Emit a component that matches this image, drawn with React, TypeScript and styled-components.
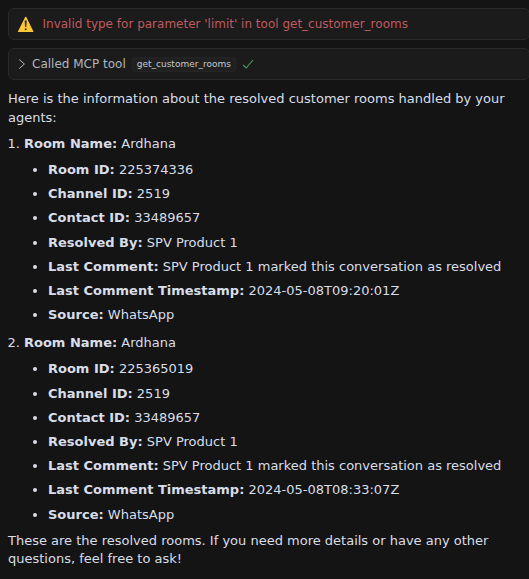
import React from 'react';
import styled, { createGlobalStyle } from 'styled-components';

const GlobalStyle = createGlobalStyle`
  html, body { margin: 0; background: #141414; overflow: hidden; }
  * { box-sizing: border-box; }
`;

const Chat = styled.main`
  width: 529px;
  height: 579px;
  overflow: hidden;
  padding: 8px 0 0 8px;
  background: #141414;
  color: #d8dee9;
  font: 13px/18.2px "DejaVu Sans", sans-serif;
`;

const Panel = styled.div<{ $gap: number; $pad: number }>`
  display: flex;
  align-items: center;
  gap: ${p => p.$gap}px;
  width: 522px;
  height: 32px;
  padding-left: ${p => p.$pad}px;
  border: 1px solid #2a2a2a;
  border-radius: 6px;
  background: #1b1b1b;
  margin-bottom: 8px;
`;

const ErrorText = styled.span`color: #bf5a60; font-size: 12px;`;

const ToolLabel = styled.span`font-size: 12px; color: #b0b5be;`;

const ToolName = styled.code`
  margin: 0 0 0 2px;
  padding: 0 4px;
  height: 15px;
  border: 1px solid #242424;
  border-radius: 2px;
  background: #202020;
  color: #c4c8cf;
  font: 9px/12px "DejaVu Sans", sans-serif;
`;

const Paragraph = styled.p`
  margin: 0;
  width: 513px;
`;

const Messages = styled.div`
  padding-top: 2.4px;
`;

const Rooms = styled.ol`
  margin: 8px 0;
  padding-left: 16px;
`;

const Room = styled.li`
  margin-bottom: 9.8px;
  &:last-child { margin-bottom: 8px; }
`;

const Details = styled.ul`
  margin: 8px 0 0;
  padding-left: 24px;
  list-style: disc;
`;

const Detail = styled.li`
  margin-bottom: 6px;
`;

const rooms = [
  { id: '225374336', time: '2024-05-08T09:20:01Z' },
  { id: '225365019', time: '2024-05-08T08:33:07Z' },
];

const Warning = () => (
  <svg width="17" height="17" viewBox="0 0 17 17">
    <path d="M8.7 1.3 15.8 15.4H1.6Z" fill="#fcc934" stroke="#fcc934" strokeWidth="1.2" strokeLinejoin="round" />
    <path d="M7.6 4.6h2.2l-.5 6.4H8.1Z" fill="#333" />
    <circle cx="8.7" cy="13.2" r="1" fill="#333" />
  </svg>
);

const Chevron = () => (
  <svg width="16" height="16" viewBox="0 0 16 16" fill="none" stroke="#b0b5be">
    <path d="m7.2 3.6 5.2 4.4-5.2 4.6" />
  </svg>
);

const Check = () => (
  <svg width="16" height="16" viewBox="0 0 16 16" fill="none" stroke="#4c9a63" strokeWidth="1.1">
    <path d="m3.2 9 3 3 6.8-8" />
  </svg>
);

export default function App() {
  return (
    <>
      <GlobalStyle />
      <Chat>
        <Panel $gap={8.5} $pad={8}>
          <Warning />
          <ErrorText>Invalid type for parameter 'limit' in tool get_customer_rooms</ErrorText>
        </Panel>
        <Panel $gap={4} $pad={3}>
          <Chevron />
          <ToolLabel>Called MCP tool</ToolLabel>
          <ToolName>get_customer_rooms</ToolName>
          <Check />
        </Panel>
        <Messages>
          <Paragraph>Here is the information about the resolved customer rooms handled by your agents:</Paragraph>
          <Rooms>
            {rooms.map(room => (
              <Room key={room.id}>
                <strong>Room Name:</strong> Ardhana
                <Details>
                  <Detail><strong>Room ID:</strong> {room.id}</Detail>
                  <Detail><strong>Channel ID:</strong> 2519</Detail>
                  <Detail><strong>Contact ID:</strong> 33489657</Detail>
                  <Detail><strong>Resolved By:</strong> SPV Product 1</Detail>
                  <Detail><strong>Last Comment:</strong> SPV Product 1 marked this conversation as resolved</Detail>
                  <Detail><strong>Last Comment Timestamp:</strong> {room.time}</Detail>
                  <Detail><strong>Source:</strong> WhatsApp</Detail>
                </Details>
              </Room>
            ))}
          </Rooms>
          <Paragraph>These are the resolved rooms. If you need more details or have any other questions, feel free to ask!</Paragraph>
        </Messages>
      </Chat>
    </>
  );
}
